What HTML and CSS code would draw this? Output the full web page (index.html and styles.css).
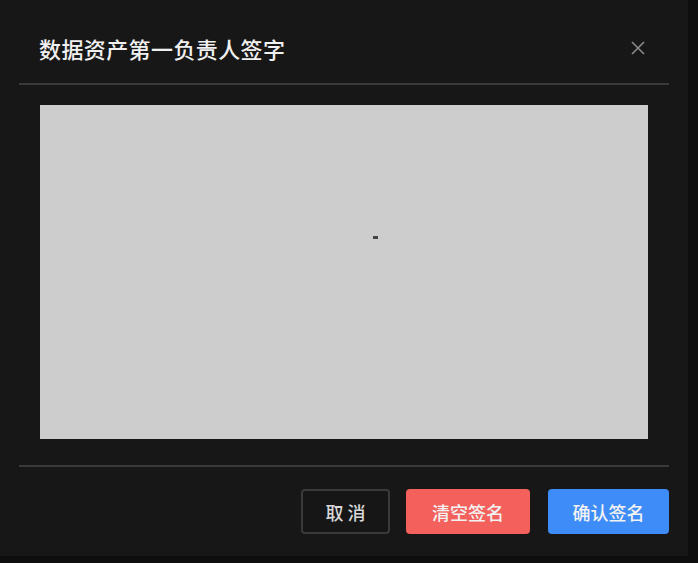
FILE: index.html
```html
<!DOCTYPE html>
<html lang="zh">
<head>
<meta charset="utf-8">
<title>签字</title>
<link rel="stylesheet" href="styles.css">
</head>
<body>
<div class="dialog">
  <div class="header">
    <div class="title">数据资产第一负责人签字</div>
    <button class="close" aria-label="关闭">
      <svg width="14" height="14" viewBox="0 0 14 14"><path d="M1 1L13 13M13 1L1 13" stroke="#8a8a8a" stroke-width="1.6" fill="none"/></svg>
    </button>
  </div>
  <div class="divider"></div>
  <div class="body">
    <div class="pad"><span class="dot"></span></div>
  </div>
  <div class="divider"></div>
  <div class="footer">
    <button class="btn btn-cancel">取 消</button>
    <button class="btn btn-clear">清空签名</button>
    <button class="btn btn-ok">确认签名</button>
  </div>
</div>
</body>
</html>
```
FILE: styles.css
```css
html, body {
  margin: 0;
  padding: 0;
  background: #0e0e0e;
  font-family: "Noto Sans CJK SC", "Noto Sans", sans-serif;
}
.dialog {
  width: 688px;
  height: 556px;
  background: #171717;
  display: flex;
  flex-direction: column;
}
.header {
  display: flex;
  align-items: center;
  justify-content: space-between;
  padding: 34px 43px 21px 39px;
  height: 28px;
}
.title {
  color: #f0f0f0;
  font-size: 22px;
  font-weight: 500;
  letter-spacing: 0.4px;
  line-height: 28px;
}
.close {
  background: none;
  border: none;
  padding: 0;
  width: 14px;
  height: 14px;
  display: flex;
  cursor: pointer;
}
.divider {
  height: 2px;
  background: #3a3a3a;
  margin: 0 19px;
}
.body {
  padding: 20px 40px 26px 40px;
}
.pad {
  width: 608px;
  height: 334px;
  background: #cdcdcd;
  display: flex;
  align-items: flex-start;
}
.dot {
  display: block;
  width: 5px;
  height: 3px;
  background: #444;
  margin: 131px 0 0 333px;
}
.footer {
  display: flex;
  justify-content: flex-end;
  padding: 22px 19px 0 0;
}
.btn {
  height: 45px;
  border-radius: 4px;
  font-family: "Noto Sans CJK SC", "Noto Sans", sans-serif;
  font-size: 18px;
  font-weight: 500;
  color: #f2f2f2;
  border: none;
  padding: 0;
  cursor: pointer;
}
.btn-cancel {
  width: 89px;
  background: #161616;
  border: 2px solid #3a3a3a;
  color: #d8d8d8;
}
.btn-clear {
  width: 124px;
  margin-left: 16px;
  background: #f4615d;
}
.btn-ok {
  width: 121px;
  margin-left: 18px;
  background: #3d8cf8;
}
```
